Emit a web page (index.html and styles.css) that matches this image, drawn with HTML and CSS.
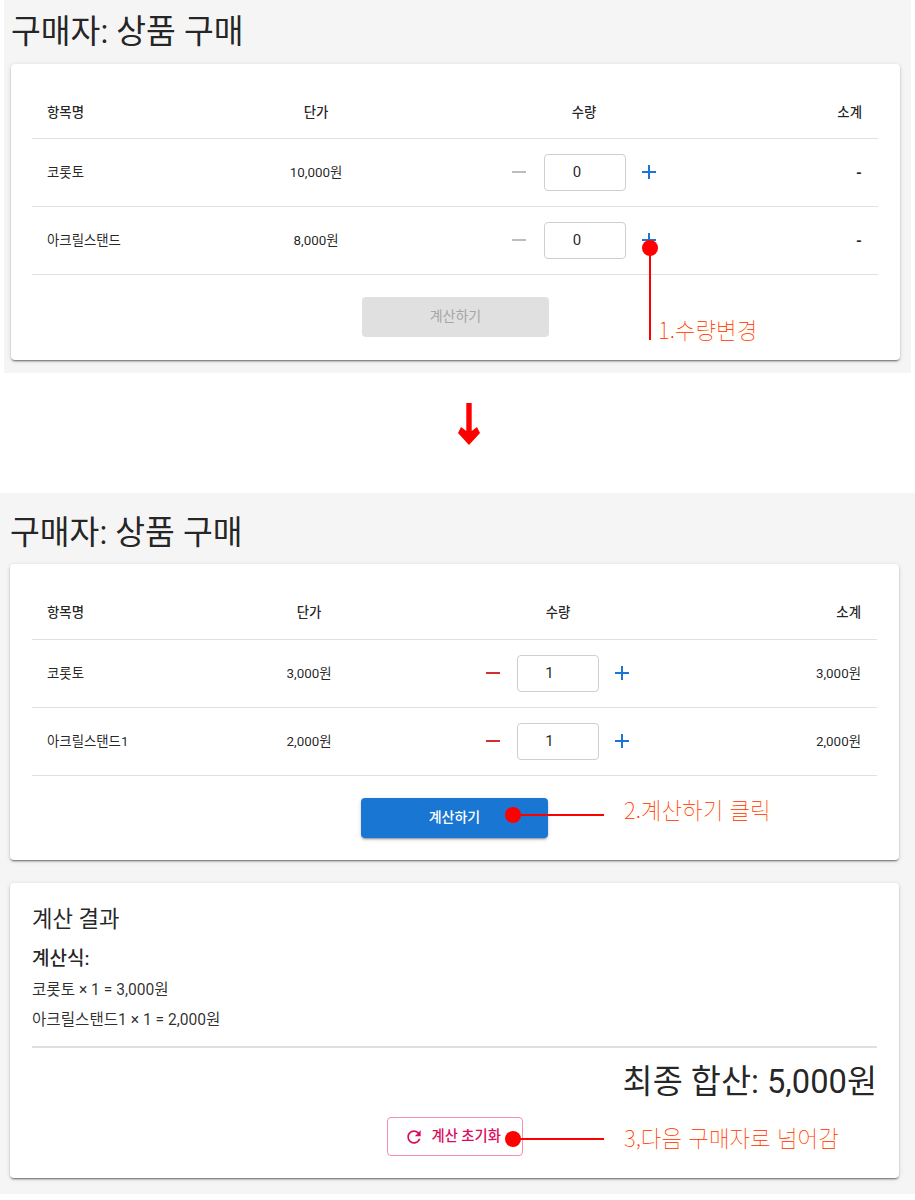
FILE: index.html
```html
<!DOCTYPE html>
<html lang="ko">
<head>
	<meta charset="utf-8">
	<title>구매자: 상품 구매</title>
	<link rel="stylesheet" href="styles.css">
</head>
<body>
<div class="panel panel_top">
	<h1 class="title">구매자: 상품 구매</h1>
	<div class="card card_top">
		<table class="items items_first">
			<colgroup><col class="col_name"><col class="col_price"><col class="col_qty"><col class="col_sum"></colgroup>
			<thead>
				<tr><th class="left">항목명</th><th>단가</th><th>수량</th><th class="right">소계</th></tr>
			</thead>
			<tbody>
				<tr>
					<td class="left">코롯토</td>
					<td>10,000원</td>
					<td>
						<div class="stepper">
							<button class="icon_btn off"><svg viewBox="0 0 24 24"><path d="M19 13H5v-2h14v2z"/></svg></button>
							<div class="qty">0</div>
							<button class="icon_btn plus"><svg viewBox="0 0 24 24"><path d="M19 13h-6v6h-2v-6H5v-2h6V5h2v6h6v2z"/></svg></button>
						</div>
					</td>
					<td class="right dash">-</td>
				</tr>
				<tr>
					<td class="left">아크릴스탠드</td>
					<td>8,000원</td>
					<td>
						<div class="stepper">
							<button class="icon_btn off"><svg viewBox="0 0 24 24"><path d="M19 13H5v-2h14v2z"/></svg></button>
							<div class="qty">0</div>
							<button class="icon_btn plus"><svg viewBox="0 0 24 24"><path d="M19 13h-6v6h-2v-6H5v-2h6V5h2v6h6v2z"/></svg></button>
						</div>
					</td>
					<td class="right dash">-</td>
				</tr>
			</tbody>
		</table>
		<div class="actions">
			<button class="calc disabled">계산하기</button>
		</div>
	</div>
</div>

<div class="arrow_gap">
	<svg class="arrow" viewBox="0 0 22 42"><polygon points="8.3,0 13.7,0 13.7,28 19,24 22,30 11,42 0,30 3,24 8.3,28"/></svg>
</div>

<div class="panel panel_bottom">
	<h1 class="title">구매자: 상품 구매</h1>
	<div class="card card_second">
		<table class="items items_second">
			<colgroup><col class="col_name"><col class="col_price"><col class="col_qty"><col class="col_sum"></colgroup>
			<thead>
				<tr><th class="left">항목명</th><th>단가</th><th>수량</th><th class="right">소계</th></tr>
			</thead>
			<tbody>
				<tr>
					<td class="left">코롯토</td>
					<td>3,000원</td>
					<td>
						<div class="stepper">
							<button class="icon_btn minus"><svg viewBox="0 0 24 24"><path d="M19 13H5v-2h14v2z"/></svg></button>
							<div class="qty">1</div>
							<button class="icon_btn plus"><svg viewBox="0 0 24 24"><path d="M19 13h-6v6h-2v-6H5v-2h6V5h2v6h6v2z"/></svg></button>
						</div>
					</td>
					<td class="right">3,000원</td>
				</tr>
				<tr>
					<td class="left">아크릴스탠드1</td>
					<td>2,000원</td>
					<td>
						<div class="stepper">
							<button class="icon_btn minus"><svg viewBox="0 0 24 24"><path d="M19 13H5v-2h14v2z"/></svg></button>
							<div class="qty">1</div>
							<button class="icon_btn plus"><svg viewBox="0 0 24 24"><path d="M19 13h-6v6h-2v-6H5v-2h6V5h2v6h6v2z"/></svg></button>
						</div>
					</td>
					<td class="right">2,000원</td>
				</tr>
			</tbody>
		</table>
		<div class="actions">
			<button class="calc">계산하기</button>
		</div>
	</div>

	<div class="card card_result">
		<h2 class="result_title">계산 결과</h2>
		<h3 class="formula_title">계산식:</h3>
		<p class="formula">코롯토 × 1 = 3,000원</p>
		<p class="formula">아크릴스탠드1 × 1 = 2,000원</p>
		<hr class="divider">
		<div class="total">최종 합산: 5,000원</div>
		<div class="actions">
			<button class="reset">
				<svg viewBox="0 0 24 24"><path d="M17.65 6.35C16.2 4.9 14.21 4 12 4c-4.42 0-7.99 3.58-7.99 8s3.57 8 7.99 8c3.73 0 6.84-2.55 7.73-6h-2.08c-.82 2.33-3.04 4-5.65 4-3.31 0-6-2.69-6-6s2.69-6 6-6c1.66 0 3.14.69 4.22 1.78L13 11h7V4l-2.35 2.35z"/></svg>
				계산 초기화
			</button>
		</div>
	</div>
</div>

<!-- red notes drawn over the screenshot -->
<div class="dot dot_1"></div>
<div class="line_v"></div>
<div class="note note_1">1.수량변경</div>

<div class="dot dot_2"></div>
<div class="line_h line_2"></div>
<div class="note note_2">2.계산하기 클릭</div>

<div class="dot dot_3"></div>
<div class="line_h line_3"></div>
<div class="note note_3">3,다음 구매자로 넘어감</div>
</body>
</html>
```

FILE: styles.css
```css
* {
	box-sizing: border-box;
}
body {
	margin: 0;
	background: #fff;
	color: rgba(0, 0, 0, 0.87);
	font-family: "Roboto", "Noto Sans CJK KR", sans-serif;
	font-size: 14px;
}
.panel {
	background: #f5f5f5;
}
.panel_top {
	margin: 0 4px;
	height: 373px;
	padding: 0 11px 0 7px;
}
.panel_bottom {
	height: 701px;
	padding: 0 16px 0 10px;
}
.title {
	margin: 0;
	height: 64px;
	line-height: 64px;
	font-size: 32.4px;
	font-weight: 400;
}
.panel_bottom .title {
	height: 71px;
	line-height: 80px;
}
.card {
	background: #fff;
	border-radius: 4px;
	box-shadow: 0 2px 2px -1px rgba(0, 0, 0, 0.45), 0 1px 2px 0 rgba(0, 0, 0, 0.14), 0 1px 5px 0 rgba(0, 0, 0, 0.12);
}
.card_top {
	height: 296px;
	padding: 21px 22px 0 21px;
}
.card_second {
	height: 296px;
	padding: 22px 22px 0;
}
.card_result {
	height: 295px;
	margin-top: 23px;
	padding: 22px 22px 0;
}
.items {
	width: 100%;
	table-layout: fixed;
	border-collapse: collapse;
}
.col_name {
	width: 190px;
}
.items_first .col_price {
	width: 188px;
}
.items_first .col_qty {
	width: 348px;
}
.items_second .col_price {
	width: 174px;
}
.items_second .col_qty {
	width: 324px;
}
.items th,
.items td {
	padding: 0 16px;
	text-align: center;
	border-bottom: 1px solid #e0e0e0;
	font-size: 13.4px;
}
.items th {
	height: 53px;
	font-weight: 500;
	color: rgba(0, 0, 0, 0.87);
}
.items_second th {
	padding-bottom: 2px;
}
.items td {
	height: 68px;
	padding-bottom: 2px;
}
.items td.dash {
	padding-top: 3px;
	font-size: 15px;
	font-weight: 700;
}
.stepper {
	display: flex;
	align-items: center;
	justify-content: center;
	margin-top: 2px;
}
.items_second .stepper {
	margin-right: 2px;
}
.items .left {
	padding-left: 15px;
	text-align: left;
}
.items .right {
	text-align: right;
}
.icon_btn {
	width: 40px;
	height: 40px;
	padding: 8px;
	border: 0;
	background: none;
}
.icon_btn svg {
	display: block;
	width: 24px;
	height: 24px;
}
.off svg {
	fill: #bdbdbd;
}
.minus svg {
	fill: #d32f2f;
}
.plus svg {
	fill: #1976d2;
}
.qty {
	width: 82px;
	height: 37px;
	margin: 0 3px 0 5px;
	padding-right: 16px;
	line-height: 35px;
	border: 1px solid #cfcfcf;
	border-radius: 4px;
	text-align: center;
	font-size: 15px;
}
.items_second .qty {
	margin: 0 3px 0 4px;
}
.actions {
	display: flex;
	justify-content: center;
	margin-top: 22px;
}
.calc {
	width: 187px;
	height: 40px;
	padding: 0 0 3px;
	border: 0;
	border-radius: 4px;
	background: #1976d2;
	color: #fff;
	font-family: inherit;
	font-size: 14px;
	font-weight: 500;
	box-shadow: 0 3px 1px -2px rgba(0, 0, 0, 0.2), 0 2px 2px 0 rgba(0, 0, 0, 0.14), 0 1px 5px 0 rgba(0, 0, 0, 0.12);
}
.calc.disabled {
	margin-left: 1px;
	background: #e0e0e0;
	color: #a6a6a6;
	font-weight: 400;
	box-shadow: none;
}
.arrow_gap {
	display: flex;
	justify-content: center;
	height: 120px;
	padding: 30px 0 0 22px;
}
.arrow {
	width: 22px;
	height: 42px;
	fill: #f00;
}
.result_title {
	margin: 0;
	font-size: 22.3px;
	font-weight: 400;
	line-height: 28px;
}
.formula_title {
	margin: 14px 0 0;
	font-size: 19px;
	font-weight: 500;
	line-height: 24px;
}
.formula {
	margin: 8px 0 0;
	font-size: 15.6px;
	line-height: 22px;
	color: rgba(0, 0, 0, 0.82);
}
.divider {
	margin: 15px 0 0;
	border: 0;
	border-top: 2px solid #e0e0e0;
	height: 2px;
}
.total {
	margin-top: 13px;
	text-align: right;
	font-size: 32.7px;
	line-height: 42px;
}
.card_result .actions {
	margin-top: 14px;
}
.reset {
	display: flex;
	align-items: center;
	gap: 8px;
	width: 136px;
	height: 39px;
	padding: 0 0 4px 16px;
	background: #fff;
	border: 1px solid #f48fb1;
	border-radius: 4px;
	color: #dc0a5c;
	font-family: inherit;
	font-size: 14.3px;
	font-weight: 500;
	white-space: nowrap;
}
.reset svg {
	flex: none;
	width: 20px;
	height: 20px;
	margin-top: 4px;
	fill: #dc0a5c;
}
.dot {
	position: absolute;
	width: 16px;
	height: 16px;
	border-radius: 50%;
	background: #f00;
}
.dot_1 {
	left: 642px;
	top: 240px;
}
.dot_2 {
	left: 505px;
	top: 807px;
}
.dot_3 {
	left: 505px;
	top: 1131px;
}
.line_v {
	position: absolute;
	left: 649px;
	top: 248px;
	width: 2px;
	height: 92px;
	background: #f00;
}
.line_h {
	position: absolute;
	left: 513px;
	width: 91px;
	height: 2px;
	background: #f00;
}
.line_2 {
	top: 814px;
}
.line_3 {
	top: 1138px;
}
.note {
	position: absolute;
	font-family: "Noto Sans CJK KR", sans-serif;
	font-size: 22.4px;
	font-weight: 100;
	line-height: 28px;
	color: #ff2a0a;
	white-space: nowrap;
	text-shadow: 0 0 4px #fff3b8;
}
.note_1 {
	left: 658px;
	top: 315px;
}
.note_2 {
	left: 624px;
	top: 795px;
}
.note_3 {
	left: 624px;
	top: 1123px;
}
```
